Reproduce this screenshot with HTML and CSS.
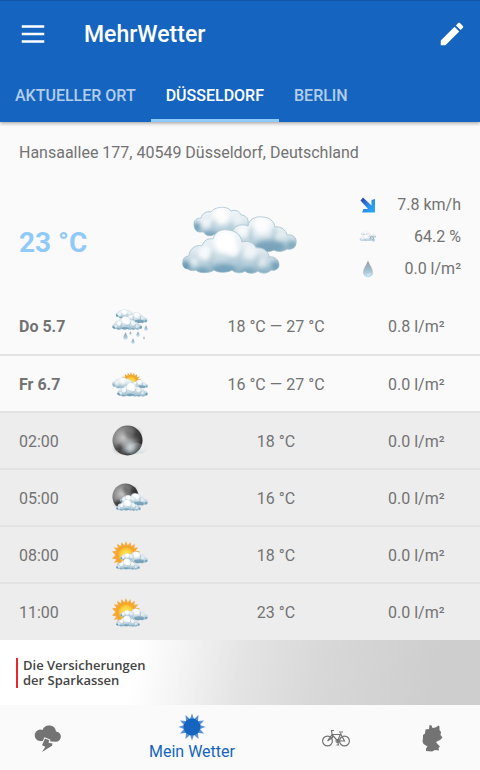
FILE: index.html
```html
<!DOCTYPE html>
<html lang="de">
<head>
<meta charset="utf-8">
<meta name="viewport" content="width=device-width, initial-scale=1">
<title>MehrWetter</title>
<link rel="stylesheet" href="styles.css">
</head>
<body>
<svg class="defs" width="0" height="0" aria-hidden="true">
  <defs>
    <linearGradient id="cloudFill" x1="0" y1="0" x2="0" y2="1">
      <stop offset="0" stop-color="#f6f9fb"/>
      <stop offset=".5" stop-color="#dde8ee"/>
      <stop offset=".8" stop-color="#b3ccd9"/>
      <stop offset="1" stop-color="#86adc2"/>
    </linearGradient>
    <filter id="soft" x="-30%" y="-30%" width="160%" height="160%"><feGaussianBlur stdDeviation="2.200"/></filter>
    <radialGradient id="sunFill">
      <stop offset="0" stop-color="#ffee5c"/>
      <stop offset=".6" stop-color="#fdcf3d"/>
      <stop offset="1" stop-color="#f39a1e"/>
    </radialGradient>
    <radialGradient id="moonFill" cx=".36" cy=".4" r=".66">
      <stop offset="0" stop-color="#c8c8c8"/>
      <stop offset=".5" stop-color="#858585"/>
      <stop offset="1" stop-color="#222"/>
    </radialGradient>
    <linearGradient id="arrowFill" x1="0" y1="0" x2="1" y2="1">
      <stop offset="0" stop-color="#3033a8"/>
      <stop offset=".5" stop-color="#2a8ae6"/>
      <stop offset="1" stop-color="#27b0fb"/>
    </linearGradient>
    <linearGradient id="dropFill" x1="0" y1="0" x2="0" y2="1">
      <stop offset="0" stop-color="#8d9aa3"/>
      <stop offset=".55" stop-color="#a5bdca"/>
      <stop offset="1" stop-color="#bfe4f7"/>
    </linearGradient>

    <path id="smallShape" d="M7 26C2 26 1 21 1 18C1 14 4 12 8 12C9 7 14 5 18 6C21 1 34 -1 38 5C43 3 47 6 48 9C53 9 56 13 55 18C55 22 52 25 48 25C46 29 39 30 36 28C32 31 25 31 22 28C18 31 12 30 11 26Z"/>
    <path id="rightShape" d="M3 27C0 24 0 18 2 14C5 9 11 8 17 10C18 3 25 0 31 1C38 1 43 5 44 11C50 10 55 14 56 19C62 18 66 22 65 27C65 32 60 34 56 33C52 36 46 36 43 34C37 37 29 36 25 31C18 34 9 33 3 27Z"/>
    <path id="wideShape" d="M6 41C1 41 0 36 1 33C1 30 4 28 7 28C7 21 14 16 20 18C22 12 26 10 31 11C33 4 39 1 45 2C53 2 59 7 60 14C66 12 72 15 74 20C81 19 87 24 87 29C93 28 97 32 97 37C97 41 93 43 89 42C86 46 79 46 76 43C72 46 66 46 63 43C59 46 53 45 50 42C45 45 36 45 32 42C29 45 17 46 14 42C12 43 8 43 6 41Z"/>
    <clipPath id="smallClip"><use href="#smallShape"/></clipPath>
    <clipPath id="rightClip"><use href="#rightShape"/></clipPath>
    <clipPath id="wideClip"><use href="#wideShape"/></clipPath>

    <symbol id="cloudSmall" viewBox="0 0 56 32">
      <use href="#smallShape" fill="url(#cloudFill)" stroke="#b0c9d5" stroke-width="1"/>
      <g clip-path="url(#smallClip)"><g filter="url(#soft)">
        <ellipse cx="4" cy="21" rx="4" ry="5" fill="#5d92ae" opacity=".8"/>
        <ellipse cx="17" cy="28" rx="7" ry="3" fill="#6b9ab3" opacity=".7"/>
        <circle cx="28" cy="10" r="8" fill="#fff" opacity=".9"/>
        <circle cx="13" cy="17" r="5" fill="#f5f9fb" opacity=".8"/>
        <path d="M19 26C17 19 22 18 23 14M38 25C35 21 40 17 40 14" fill="none" stroke="#a5c1cf" stroke-width="2"/>
        <circle cx="44" cy="14" r="5" fill="#eff5f8" opacity=".7"/>
      </g></g>
    </symbol>
    <symbol id="cloudRight" viewBox="0 0 66 37">
      <use href="#rightShape" fill="url(#cloudFill)" stroke="#b0c9d5" stroke-width="1"/>
      <g clip-path="url(#rightClip)"><g filter="url(#soft)">
        <ellipse cx="39" cy="30" rx="15" ry="6" fill="#6898b1" opacity=".75"/>
        <ellipse cx="61" cy="29" rx="5" ry="4" fill="#6898b1" opacity=".7"/>
        <circle cx="31" cy="10" r="8" fill="#fff" opacity=".85"/>
        <circle cx="12" cy="15" r="6" fill="#fff" opacity=".7"/>
        <circle cx="49" cy="19" r="5" fill="#e2edf2" opacity=".8"/>
        <path d="M21 25C18 20 19 15 21 12M42 25C42 20 44 17 44 12" fill="none" stroke="#92b5c6" stroke-width="2"/>
      </g></g>
    </symbol>
    <symbol id="cloudWide" viewBox="0 0 98 46">
      <use href="#wideShape" fill="url(#cloudFill)" stroke="#b0c9d5" stroke-width="1"/>
      <g clip-path="url(#wideClip)"><g filter="url(#soft)">
        <ellipse cx="4" cy="38" rx="5" ry="5" fill="#5d92ae" opacity=".85"/>
        <ellipse cx="94" cy="38" rx="5" ry="5" fill="#5d92ae" opacity=".7"/>
        <ellipse cx="20" cy="43" rx="6" ry="3" fill="#5d92ae" opacity=".6"/>
        <ellipse cx="42" cy="41" rx="12" ry="5" fill="#6b9db7" opacity=".8"/>
        <ellipse cx="66" cy="43" rx="7" ry="3" fill="#6b9db7" opacity=".6"/>
        <circle cx="43" cy="14" r="11" fill="#fff"/>
        <circle cx="51" cy="22" r="7" fill="#fff" opacity=".8"/>
        <circle cx="23" cy="25" r="7" fill="#fff" opacity=".8"/>
        <circle cx="68" cy="24" r="7" fill="#f4f8fa" opacity=".8"/>
        <circle cx="12" cy="34" r="4" fill="#edf4f7" opacity=".8"/>
        <circle cx="80" cy="34" r="5" fill="#e6eff3" opacity=".8"/>
        <path d="M29 40C25 35 31 29 30 23M46 31C53 33 59 29 60 21M76 42C73 38 75 33 77 28M57 42C54 38 57 35 59 33" fill="none" stroke="#97b9c9" stroke-width="2"/>
      </g></g>
    </symbol>
    <symbol id="clouds" viewBox="0 0 116 68">
      <use href="#cloudSmall" x="11" y="0" width="56" height="32"/>
      <use href="#cloudRight" x="49" y="10" width="66" height="37"/>
      <use href="#cloudWide" x="0" y="22" width="98" height="46"/>
    </symbol>
    <symbol id="drop" viewBox="0 0 12 20">
      <path d="M6 0C6.600 4 11.500 9 11.500 14A5.500 5.500 0 0 1 .5 14C.5 9 5.400 4 6 0Z" fill="url(#dropFill)"/>
      <path d="M8.500 14.500a2.500 3 0 0 1-3.500 2" fill="none" stroke="#e6f6fd" stroke-width="1"/>
    </symbol>
    <symbol id="sun" viewBox="0 0 32 32">
      <path d="M16 0L18 5 21 1 22 6 26 3 25.500 8 30 7 27 11 32 12 28 16 32 19 27 21 30 25 25.500 24 26 29 22 26 21 31 18 27 16 32 14 27 11 31 10 26 6 29 6.500 24 2 25 5 21 0 20 4 16 0 12 5 11 2 7 6.500 8 6 3 10 6 11 1 14 5Z" fill="#f5a93c"/>
      <circle cx="16" cy="16" r="10.500" fill="url(#sunFill)"/>
    </symbol>
    <symbol id="moon" viewBox="0 0 32 32">
      <circle cx="16" cy="16" r="15.500" fill="url(#moonFill)"/>
      <g filter="url(#soft)">
        <path d="M14 4c5 0 8 3 7 6s4 3 3 6-6 0-8-3-5-5-2-9Z" fill="#444" opacity=".5"/>
        <ellipse cx="8" cy="24" rx="4" ry="3" fill="#111" opacity=".7"/>
        <ellipse cx="25" cy="10" rx="3" ry="4" fill="#111" opacity=".6"/>
        <ellipse cx="19" cy="23" rx="5" ry="6" fill="#d6e1e6" opacity=".75"/>
      </g>
    </symbol>
    <symbol id="sunCloud" viewBox="0 0 36 30">
      <use href="#sun" x="0" y="0" width="28" height="28"/>
      <use href="#cloudRight" x="14" y="10" width="22" height="13"/>
      <use href="#cloudSmall" x="8" y="12" width="14" height="8"/>
      <use href="#cloudWide" x="4" y="17" width="24" height="12"/>
    </symbol>
  </defs>
</svg>

<div class="app">
  <header class="header">
    <div class="toolbar">
      <button class="icon-button" type="button" aria-label="Menü">
        <svg class="tool-icon" viewBox="0 0 24 24"><path d="M3 5h18v2H3zM3 11h18v2H3zM3 17h18v2H3z"/></svg>
      </button>
      <h1 class="title">MehrWetter</h1>
      <button class="icon-button" type="button" aria-label="Bearbeiten">
        <svg class="tool-icon" viewBox="0 0 24 24"><path d="M3 17.250V21h3.750L17.810 9.940l-3.750-3.750L3 17.250zM20.710 7.040c.39-.39.39-1.020 0-1.410l-2.340-2.340c-.39-.39-1.020-.39-1.410 0l-1.830 1.830 3.750 3.750 1.830-1.830z"/></svg>
      </button>
    </div>
    <nav class="tabs">
      <a class="tab" href="#ort">AKTUELLER ORT</a>
      <a class="tab tab-active" href="#duesseldorf" aria-current="page">DÜSSELDORF</a>
      <a class="tab" href="#berlin">BERLIN</a>
    </nav>
  </header>

  <main class="content">
    <p class="address">Hansaallee 177, 40549 Düsseldorf, Deutschland</p>
    <section class="current">
      <p class="temperature">23 °C</p>
      <svg class="current-icon" viewBox="0 0 116 68" aria-hidden="true"><use href="#clouds"/></svg>
      <ul class="stats">
        <li class="stat">
          <svg class="stat-icon" viewBox="0 0 18 18" aria-hidden="true"><path d="M4 1.500L12.500 9.500V4L16 3V16.500H3L4.500 13H9L1.500 4.500Z" fill="url(#arrowFill)"/></svg>
          <span>7.8 km/h</span>
        </li>
        <li class="stat">
          <svg class="stat-icon" viewBox="0 0 18 18" aria-hidden="true"><g opacity=".65"><use href="#clouds" x="0" y="3" width="18" height="10"/></g><use href="#drop" x="10" y="8" width="3" height="5"/><use href="#drop" x="13" y="9" width="3" height="5"/></svg>
          <span>64.2 %</span>
        </li>
        <li class="stat">
          <svg class="stat-icon" viewBox="0 0 18 18" aria-hidden="true"><use href="#drop" x="3" y="0" width="12" height="18"/></svg>
          <span>0.0 l/m²</span>
        </li>
      </ul>
    </section>

    <table class="forecast">
      <colgroup><col class="col-time"><col class="col-icon"><col class="col-temp"><col class="col-rain"></colgroup>
      <tbody>
        <tr>
          <th scope="row">Do 5.7</th>
          <td class="symbol"><svg class="row-icon" viewBox="0 0 36 36" aria-hidden="true"><use href="#clouds" x="0" y="0" width="36" height="21"/><use href="#drop" x="11" y="23" width="5" height="8"/><use href="#drop" x="19" y="29" width="4" height="6"/><use href="#drop" x="24" y="22" width="4" height="6"/><use href="#drop" x="32" y="16" width="4" height="6"/><use href="#drop" x="17" y="22" width="3" height="4"/><use href="#drop" x="31" y="27" width="2" height="4"/></svg></td>
          <td class="temp">18 °C — 27 °C</td><td class="rain">0.8 l/m²</td>
        </tr>
        <tr>
          <th scope="row">Fr 6.7</th>
          <td class="symbol"><svg class="row-icon" viewBox="0 0 36 36" aria-hidden="true"><use href="#sun" x="9" y="5" width="20" height="20"/><use href="#cloudSmall" x="0" y="10" width="21" height="12"/><use href="#cloudRight" x="20" y="12" width="16" height="10"/><use href="#cloudWide" x="5" y="15" width="31" height="15"/></svg></td>
          <td class="temp">16 °C — 27 °C</td><td class="rain">0.0 l/m²</td>
        </tr>
        <tr class="hour">
          <th scope="row">02:00</th>
          <td class="symbol"><svg class="row-icon" viewBox="0 0 36 36" aria-hidden="true"><use href="#moon" x="0" y="1" width="31" height="31"/><g opacity=".25"><use href="#cloudSmall" x="13" y="18" width="22" height="13"/></g></svg></td>
          <td class="temp">18 °C</td><td class="rain">0.0 l/m²</td>
        </tr>
        <tr class="hour">
          <th scope="row">05:00</th>
          <td class="symbol"><svg class="row-icon" viewBox="0 0 36 36" aria-hidden="true"><use href="#moon" x="0" y="2" width="27" height="27"/><use href="#cloudRight" x="13" y="12" width="23" height="13"/><use href="#cloudSmall" x="8" y="14" width="16" height="9"/><use href="#cloudWide" x="4" y="18" width="25" height="12"/></svg></td>
          <td class="temp">16 °C</td><td class="rain">0.0 l/m²</td>
        </tr>
        <tr class="hour">
          <th scope="row">08:00</th>
          <td class="symbol"><svg class="row-icon" viewBox="0 0 36 36" aria-hidden="true"><use href="#sunCloud" x="0" y="3" width="36" height="30"/></svg></td>
          <td class="temp">18 °C</td><td class="rain">0.0 l/m²</td>
        </tr>
        <tr class="hour">
          <th scope="row">11:00</th>
          <td class="symbol"><svg class="row-icon" viewBox="0 0 36 36" aria-hidden="true"><use href="#sunCloud" x="0" y="3" width="36" height="30"/></svg></td>
          <td class="temp">23 °C</td><td class="rain">0.0 l/m²</td>
        </tr>
      </tbody>
    </table>
  </main>

  <a class="banner" href="#anzeige"><span class="banner-text">Die Versicherungen<br>der Sparkassen</span></a>

  <nav class="bottom-nav">
    <a class="nav-item" href="#warnungen" aria-label="Warnungen">
      <svg class="nav-icon" viewBox="0 0 28 28"><path d="M6 17A5.700 5.700 0 1 1 8.500 6 7 7 0 0 1 22 7.500 5 5 0 0 1 21.500 17.700Q14 17 6 17Z"/><path class="bolt" d="M11 14.500L15.300 16.300 14.500 18.700 18.500 19.500 18 21.700 8 28 11.300 22.700 8 21.300Z"/></svg>
    </a>
    <a class="nav-item nav-item-active" href="#wetter" aria-current="page">
      <svg class="nav-icon" viewBox="0 0 28 28"><path d="M14 0.500L16 6 20.500 2 20 8 26 7.500 22 12 27.500 14 22 16 26 20.500 20 20 20.500 26 16 22 14 27.500 12 22 7.500 26 8 20 2 20.500 6 16 0.500 14 6 12 2 7.500 8 8 7.500 2 12 6Z" opacity=".7"/><circle cx="14" cy="14" r="8.500"/></svg>
      <span>Mein Wetter</span>
    </a>
    <a class="nav-item" href="#fahrrad" aria-label="Fahrradwetter">
      <svg class="nav-icon" viewBox="0 0 28 28"><g fill="none" stroke="currentColor" stroke-width="1.200"><circle cx="5.500" cy="17" r="4.900"/><circle cx="22.500" cy="17" r="4.900"/><path d="M5.500 17L10 10.500H19L22.500 17H15.500L10 10.500M5.500 17L10.500 13.500 9.500 6.500H12M15.500 17L19 9M17 8H21M15.500 17L16.500 21H14.500"/><circle cx="15.500" cy="17" r="1.500"/></g></svg>
    </a>
    <a class="nav-item" href="#deutschland" aria-label="Deutschland">
      <svg class="nav-icon" viewBox="0 0 28 28"><path d="M11.500 1L13.500 1.500 14.500 4 17.500 3.500 20.500 1.500 21.500 2.500 21.500 6 23 8 22.500 11 24.500 13.500 22 16 18 18 19.500 20 22 22.500 20.500 24 21 26.500 17 26 14 27.500 8 27 8 24.500 9.500 22.500 5.500 20 4.500 17.500 5 14 5 11 7 9.500 7.500 5.500 11 5Z"/></svg>
    </a>
  </nav>
</div>
</body>
</html>
```

FILE: styles.css
```css
* { box-sizing: border-box; }

body {
  margin: 0;
  background: #fafafa;
  color: #737373;
  font-family: Roboto, "Liberation Sans", sans-serif;
  font-size: 16px;
  line-height: 22px;
}

a { color: inherit; text-decoration: none; }
p, h1, ul { margin: 0; padding: 0; }
.defs { position: absolute; }

.app {
  display: flex;
  flex-direction: column;
  min-height: 100vh;
}

.header {
  position: relative;
  background: #1565c0;
  border-top: 1px solid #1154a8;
  color: #fff;
  box-shadow: 0 1px 4px rgba(0, 0, 0, .4);
}

.toolbar {
  display: flex;
  align-items: center;
  height: 66px;
  padding: 0 13px 0 18px;
}

.icon-button {
  display: flex;
  padding: 0;
  border: 0;
  background: none;
  color: inherit;
}

.tool-icon {
  width: 30px;
  height: 30px;
  fill: currentColor;
}

.title {
  flex: 1;
  margin-left: 36px;
  padding-top: 2px;
  font-size: 23px;
  font-weight: 500;
  line-height: 32px;
}

.tabs { display: flex; }

.tab {
  height: 55px;
  padding: 18px 15px 0;
  border-bottom: 3px solid transparent;
  font-weight: 500;
  color: #b3cdea;
}

.tab-active {
  color: #fff;
  border-bottom-color: #90caf9;
}

.content { flex: 1; }

.address { padding: 20px 19px 0; }

.current {
  display: grid;
  grid-template-columns: 1fr auto 1fr;
  align-items: center;
  height: 134px;
  padding: 12px 19px 0;
}

.temperature {
  margin-top: 12px;
  color: #90caf9;
  font-size: 28px;
  font-weight: 700;
  line-height: 36px;
}

.current-icon {
  width: 116px;
  height: 68px;
  margin-top: 6px;
}

.stats { list-style: none; }

.stat {
  display: flex;
  align-items: center;
  justify-content: space-between;
  height: 32px;
  margin-left: 61px;
}

.stat-icon {
  width: 18px;
  height: 18px;
}

.forecast {
  width: 100%;
  table-layout: fixed;
  border-collapse: collapse;
}

.col-time { width: 19%; }
.col-icon { width: 16%; }
.col-temp { width: 45%; }
.col-rain { width: 20%; }

.forecast tr {
  height: 57px;
  border-bottom: 2px solid #e3e3e3;
}

.forecast tr:last-child { border-bottom: 0; }

.forecast th,
.forecast td {
  padding: 2px 0 0;
  text-align: center;
  vertical-align: middle;
}

.forecast th {
  padding-left: 19px;
  text-align: left;
}

.forecast .rain {
  padding-left: 4px;
  text-align: left;
}

.hour { background: #ededed; }
.forecast .hour th { font-weight: 400; }

.row-icon {
  display: block;
  width: 36px;
  height: 36px;
  margin: 0 auto;
}

.banner {
  display: flex;
  align-items: center;
  height: 65px;
  padding: 0 16px;
  background: linear-gradient(100deg, #fff 28%, #f5f5f5 37%, #e4e4e4 50%, #d8d8d8 66%, #cecece 90%);
}

.banner-text {
  padding-left: 5px;
  border-left: 2px solid #e8262b;
  color: #444;
  font-family: "Open Sans", "Noto Sans", sans-serif;
  font-size: 13px;
  font-weight: 600;
  line-height: 15px;
}

.bottom-nav {
  display: flex;
  height: 66px;
  border-bottom: 1px solid #c4c4c4;
}

.nav-item {
  display: flex;
  flex: 1;
  flex-direction: column;
  align-items: center;
  justify-content: center;
}

.nav-item-active {
  flex: 2;
  color: #1565c0;
}

.nav-icon {
  width: 28px;
  height: 28px;
  fill: currentColor;
}

.bolt {
  stroke: #fafafa;
  stroke-width: 2px;
  paint-order: stroke;
}
```
